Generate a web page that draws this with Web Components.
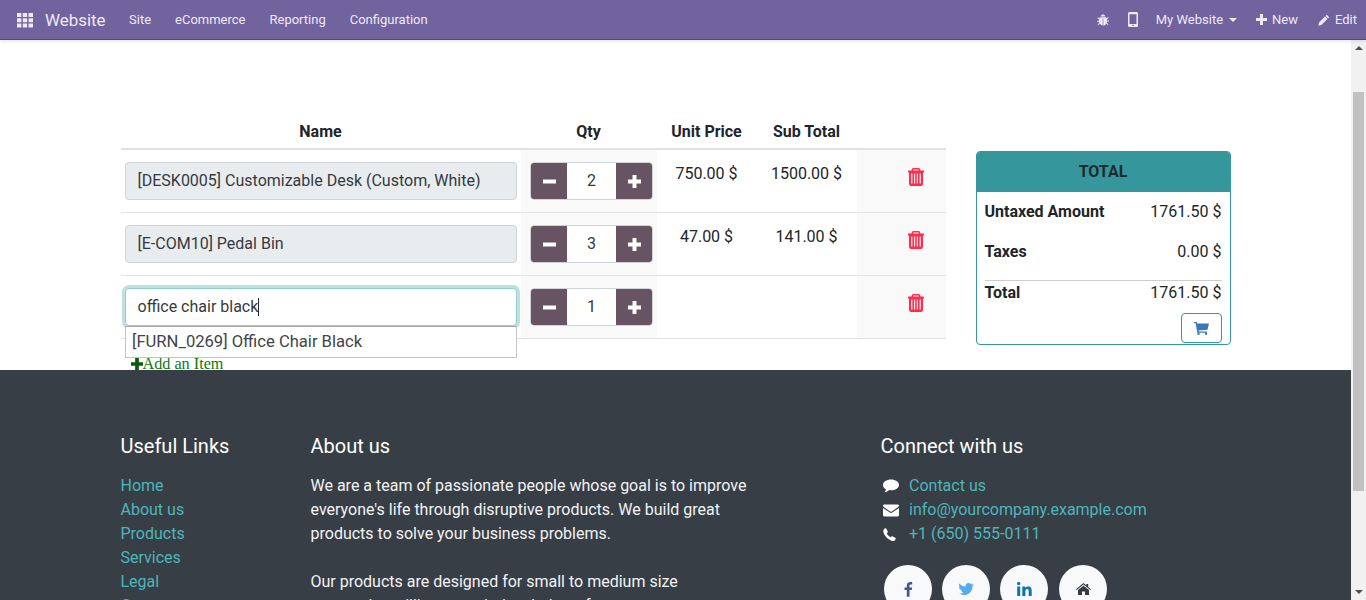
<!DOCTYPE html>
<html><head><meta charset="utf-8">
<style>
html,body{margin:0;padding:0;height:600px;overflow:hidden;background:#fff;font-family:Roboto,sans-serif}
body{display:flex;flex-direction:column}
</style></head><body>
<o-navbar></o-navbar>
<o-page></o-page>
<script>
const I={
grid:'<svg width="16" height="16" viewBox="0 0 16 16" fill="currentColor"><path d="M0 1h4.400v4H0zM5.800 1h4.400v4H5.800zM11.600 1H16v4h-4.400zM0 6.200h4.400v4H0zM5.800 6.200h4.400v4H5.800zM11.600 6.200H16v4h-4.400zM0 11.400h4.400v4H0zM5.800 11.400h4.400v4H5.800zM11.600 11.400H16v4h-4.400z"/></svg>',
bug:'<svg width="12" height="12" viewBox="0 0 12 12" fill="currentColor"><path d="M3.600 2.600C4 1.200 5 .6 6 .6s2 .6 2.400 2zM3 3.200h6c.4.3.6.7.7 1.100l1.400-1.200.6.6-1.800 1.700v1.200h2v.9h-2c0 .4-.1.8-.2 1.100l1.800 1.800-.6.6-1.600-1.600C8.700 10.800 7.500 11.400 6.300 11.500V4.800h-.6v6.700c-1.200-.1-2.400-.7-3-1.900l-1.600 1.600-.6-.6L2.300 8.800c-.1-.3-.2-.7-.2-1.100H.1v-.9h2V5.600L.3 3.900l.6-.6 1.400 1.200c.1-.5.3-1 .7-1.300z"/></svg>',
phone:'<svg width="10" height="15" viewBox="0 0 10 15" fill="currentColor"><path fill-rule="evenodd" d="M1.600 0h6.800C9.300 0 10 .7 10 1.600v11.800c0 .9-.7 1.600-1.600 1.600H1.600C.7 15 0 14.300 0 13.400V1.600C0 .7.700 0 1.600 0zM1.500 2.200v9.900h7V2.200zM4.300 12.700h1.400v1.200H4.300z"/></svg>',
plus:'<svg width="11" height="11" viewBox="0 0 11 11" fill="currentColor"><path d="M4 0h3v4h4v3H7v4H4V7H0V4h4z"/></svg>',
pencil:'<svg width="12" height="12" viewBox="0 0 12 12" fill="currentColor"><path d="M8.800.8 11.200 3.200 10 4.400 7.600 2zM7 2.600 9.400 5 3.400 11 .4 11.800 1 8.600z"/></svg>',
minus:'<svg width="13" height="13" viewBox="0 0 13 13" fill="currentColor"><path d="M0 4.500h13v4H0z"/></svg>',
plusb:'<svg width="13" height="13" viewBox="0 0 13 13" fill="currentColor"><path d="M4.500 0h4v4.500H13v4H8.500V13h-4V8.500H0v-4h4.500z"/></svg>',
trash:'<svg width="16" height="18" viewBox="0 0 16 18" fill="currentColor"><path fill-rule="evenodd" d="M5.300 0h5.400c.5 0 1 .3 1.200.8l.7 1.600h2.700c.4 0 .7.300.7.700v1.400H15V15.500c0 1.300-.8 2.500-2 2.500H3c-1.200 0-2-1.100-2-2.500V4.500H0V3.100c0-.4.300-.7.700-.7h2.700l.7-1.600C4.300.3 4.800 0 5.300 0zM5.500 1.500 5.100 2.400H10.900L10.500 1.500zM3.200 5.500V15.500H4.400V5.500zM6.100 5.500V15.500H7.200V5.500zM8.800 5.500V15.500H9.900V5.500zM11.600 5.500V15.500H12.800V5.500z"/></svg>',
cart:'<svg width="15" height="13" viewBox="0 0 15 13" fill="currentColor"><path d="M0 0h2.700l.5 1.500H15l-1.500 6.300-9 .7.300 1H13v1.300H3.200L1.700 1.300H0z"/><circle cx="4.500" cy="11.800" r="1.200"/><circle cx="12" cy="11.800" r="1.200"/></svg>',
chat:'<svg width="16" height="14" viewBox="0 0 16 14" fill="currentColor"><path d="M8 .6c4.400 0 8 2.400 8 5.300s-3.600 5.300-8 5.300c-.6 0-1.200 0-1.700-.1C5 12.300 3.500 13 1.400 13.300c.7-.8 1.300-1.700 1.500-3C1.100 9.300 0 7.700 0 5.900 0 3 3.600.6 8 .6z"/></svg>',
mail:'<svg width="16" height="13" viewBox="0 0 16 13" fill="currentColor"><path d="M1.400.5h13.200c.7 0 1.400.5 1.400 1.100 0 .6-.5 1.300-1.100 1.700L8.800 7.400c-.5.300-1.100.3-1.600 0L1.100 3.300C.5 2.900 0 2.200 0 1.600 0 1 .700.5 1.400.5zM0 4.100 6.800 8.600c.7.400 1.700.4 2.400 0L16 4.100V11.100c0 .8-.6 1.400-1.400 1.400H1.400C.6 12.500 0 11.900 0 11.100z"/></svg>',
tel:'<svg width="13" height="13" viewBox="0 0 13 13" fill="currentColor"><path d="M3 .3 4.800 3.600c.1.300.1.600-.1.800L3.800 5.300c.5 1.600 2.300 3.400 3.900 3.900l.9-.9c.2-.2.500-.2.800-.1l3.300 1.800c.2.600-.4 1.900-1 2.400-.8.600-2.200.7-3.300.3C5 11.500 1.500 8 .5 4.600.1 3.500.3 2 .9 1.300 1.400.7 2.400 0 3 .3z"/></svg>',
fb:'<svg width="9" height="15" viewBox="0 0 9 15" fill="currentColor"><path d="M8.200.2v2.300H6.800c-1.100 0-1.300.5-1.300 1.300v1.700h2.600l-.3 2.600H5.500V14.800H2.800V8.100H.5V5.500h2.300V3.500C2.800 1.300 4.200.1 6.200.1c1 0 1.700.1 2 .1z"/></svg>',
tw:'<svg width="15" height="12" viewBox="0 0 15 12" fill="currentColor"><path d="M15 1.500c-.4.600-.9 1.100-1.500 1.500v.4c0 4-3 8.600-8.600 8.600-1.800 0-3.400-.5-4.700-1.400.2 0 .5 0 .7 0 1.400 0 2.700-.5 3.800-1.300-1.300 0-2.400-.9-2.800-2.100.2 0 .4.100.6.100.3 0 .6 0 .8-.1C1 6.900-.1 5.600-.1 4v0c.4.200.9.400 1.400.4C.5 3.900 0 3 0 2c0-.6.100-1.100.4-1.500C1.900 2.300 4.100 3.500 6.600 3.600c0-.2-.1-.5-.1-.7C6.500 1.300 7.900 0 9.500 0c.9 0 1.600.4 2.200 1 .7-.1 1.300-.4 1.900-.7-.2.700-.7 1.300-1.300 1.700.6-.1 1.200-.2 1.700-.5z"/></svg>',
li:'<svg width="15" height="14" viewBox="0 0 15 14" fill="currentColor"><path d="M.2 4.600h3V14h-3zM1.700 0c1 0 1.700.7 1.700 1.600S2.700 3.200 1.700 3.200 0 2.500 0 1.600 .700 0 1.700 0zM5.300 4.600h2.900v1.300c.4-.8 1.400-1.500 2.900-1.500 3 0 3.600 2 3.600 4.500V14h-3V9.400c0-1.100 0-2.500-1.500-2.500S8.400 8.100 8.400 9.300V14H5.300z"/></svg>',
home:'<svg width="15" height="12" viewBox="0 0 15 12" fill="currentColor"><path d="M7.500 0 10.300 2.400V1h1.900v3L15 6.300l-.7.800L7.500 1.500.7 7.100 0 6.300zM7.500 2.700 13 7.100V12H9V8.400H6V12H2V7.100z"/></svg>'
};
function def(name,css,html){
 customElements.define(name,class extends HTMLElement{
  connectedCallback(){ if(this.shadowRoot)return; const r=this.attachShadow({mode:'open'}); r.innerHTML='<style>'+css+'</style>'+(typeof html==='function'?html(this):html); }
 });
}
def('o-navbar',`
:host{display:flex;align-items:center;height:39px;background:#71639e;border-bottom:1px solid #4f4670;box-shadow:0 1px 4px rgba(0,0,0,.12);color:#eee9f5;font:13px Roboto,sans-serif;flex:none;position:relative;z-index:3;padding:0 9px 0 17px}
.ic{display:flex}
.brand{font-size:16.9px;margin:0 12px;width:60px;white-space:nowrap}
a{margin:0 12px;white-space:nowrap}
.sp{flex:1}
.r{display:flex;align-items:center;gap:4px;white-space:nowrap}
.caret{width:0;height:0;border:4px solid transparent;border-top-color:currentColor;border-bottom:0;margin-left:2px}
`,`<span class="ic">${I.grid}</span><span class="brand">Website</span><a>Site</a><a>eCommerce</a><a>Reporting</a><a>Configuration</a><span class="sp"></span>
<span class="r" style="margin-right:19px">${I.bug}</span><span class="r" style="margin-right:18px">${I.phone}</span>
<span class="r" style="margin-right:19px">My Website<span class="caret"></span></span><span class="r" style="margin-right:20px">${I.plus}<span style="margin-left:1px">New</span></span><span class="r">${I.pencil}<span style="margin-left:1px">Edit</span></span>`);

def('o-page',`
:host{display:flex;flex:1;min-height:0;overflow:hidden}
.main{flex:1;min-width:0;display:flex;flex-direction:column}
.bar{width:15px;background:#f1f1f1;position:relative;flex:none}
.up{position:absolute;left:4px;top:6px;width:0;height:0;border:4px solid transparent;border-top:0;border-bottom:4px solid #505050}
.down{position:absolute;left:4px;bottom:6px;width:0;height:0;border:4px solid transparent;border-bottom:0;border-top:4px solid #505050}
.thumb{position:absolute;left:2px;width:11px;top:52px;height:399px;background:#c1c1c1}
.top{height:330px;flex:none;overflow:hidden;box-sizing:border-box;padding:80px 0 0 120.5px;display:flex;align-items:flex-start;position:relative;z-index:1}
`,`<div class="main"><div class="top"><o-cart></o-cart><o-total></o-total></div><o-footer></o-footer></div><div class="bar"><span class="up"></span><span class="thumb"></span><span class="down"></span></div>`);

const row=(cls,name,q,p,s)=>`<o-row ${cls?'focus':''} q="${q}" p="${p}" s="${s}" n="${name}"></o-row>`;
def('o-cart',`
:host{display:block;width:825px;flex:none;font:16px/24px Roboto,sans-serif;color:#212529;position:relative}
.h{display:grid;grid-template-columns:400px 136px 100px 100px 89px;height:30px;box-sizing:border-box;border-bottom:2px solid #dee2e6;font-weight:700;text-align:center;line-height:23px}
.h span{white-space:nowrap}
.add{position:absolute;left:10px;top:235px;font:16.2px/18px "Liberation Serif",serif;color:#0f7a0f;display:flex;align-items:center;gap:0}
.add svg{color:#0b5c0b;display:block}
`,`<div class="h"><span>Name</span><span>Qty</span><span>Unit Price</span><span>Sub Total</span><span></span></div>
${row(0,'[DESK0005] Customizable Desk (Custom, White)',2,'750.00 $','1500.00 $')}
${row(0,'[E-COM10] Pedal Bin',3,'47.00 $','141.00 $')}
${row(1,'office chair black',1,'','')}
<div class="add"><svg width="12" height="12" viewBox="0 0 13 13" fill="currentColor"><path d="M4.500 0h4v4.500H13v4H8.500V13h-4V8.500H0v-4h4.500z"/></svg>Add an Item</div>
<o-suggest>[FURN_0269] Office Chair Black</o-suggest>`);

def('o-row',`
:host{display:grid;grid-template-columns:400px 136px 100px 100px 89px;height:63px;box-sizing:border-box;border-bottom:1px solid #dee2e6}
.c{text-align:center;padding-top:12px;box-sizing:border-box;white-space:nowrap}
.name{padding:12px 4px 0;text-align:left;background:#fff}
.inp{height:38px;box-sizing:border-box;border:1px solid #ced4da;border-radius:4px;background:#e9ecef;padding:0 12px;line-height:36px;color:#343a40;white-space:nowrap;position:relative}
.foc{background:#fff;border-color:#8fcfcf;box-shadow:0 0 0 3px rgba(1,126,132,.25)}
.caret{display:inline-block;width:1px;height:18px;background:#212529;vertical-align:-4px}
.q{background:#f9f9f9;padding:12px 3.500px 0 9.500px;box-sizing:border-box}
.qb{display:flex;height:38px;box-sizing:border-box;border:1px solid #ced4da;border-radius:4px;overflow:hidden;background:#fff}
.b{width:36px;background:#675362;color:#fff;display:flex;align-items:center;justify-content:center;flex:none}
.v{flex:1;text-align:center;line-height:36px;color:#343a40}
.d{background:#f9f9f9;color:#ff2d4b;padding:18px 0 0 51px;box-sizing:border-box}
.d svg{display:block}
`,e=>{const f=e.hasAttribute('focus');return `<div class="name"><div class="inp ${f?'foc':''}">${e.getAttribute('n')}${f?'<span class="caret"></span>':''}</div></div>
<div class="q"><div class="qb"><span class="b">${I.minus}</span><span class="v">${e.getAttribute('q')}</span><span class="b">${I.plusb}</span></div></div>
<div class="c" style="background:#fff">${e.getAttribute('p')}</div><div class="c" style="background:#fff">${e.getAttribute('s')}</div>
<div class="d">${I.trash}</div>`});

def('o-suggest',`
:host{position:absolute;left:4.500px;top:206px;width:392px;height:32px;box-sizing:border-box;background:#fff;border:1px solid #c4c4c4;border-top-color:#aaa;padding-left:6px;font:16.6px/30px Roboto,sans-serif;color:#3f4449;white-space:nowrap;z-index:2}
`,`<slot></slot>`);

def('o-total',`
:host{display:block;width:255px;flex:none;margin:31px 0 0 30px;height:194px;box-sizing:border-box;border:1px solid #35979c;border-radius:4px;font:16px/24px Roboto,sans-serif;color:#212529;overflow:hidden}
.t{height:40px;background:#35979c;text-align:center;font-weight:700;line-height:39px;color:#1f2a2f}
.b{padding:8px 8px 0}
.l{display:flex;justify-content:space-between}
.l b{font-weight:700}
.l+.l{margin-top:16px}
.last{border-top:1px solid #ccc;margin-top:16px!important}
.btn{margin:8px 0 0 auto;width:41px;height:30px;box-sizing:border-box;border:1px solid #35979c;border-radius:4px;color:#3a78b5;display:flex;align-items:center;justify-content:center}
`,`<div class="t">TOTAL</div><div class="b"><div class="l"><b>Untaxed Amount</b><span>1761.50 $</span></div><div class="l"><b>Taxes</b><span>0.00 $</span></div><div class="l last"><b>Total</b><span>1761.50 $</span></div><div class="btn">${I.cart}</div></div>`);

def('o-footer',`
:host{display:block;flex:1;background:#383e45;font:16px/24px Roboto,sans-serif;color:#f1f3f5;overflow:hidden;padding:64px 0 0 120.5px;box-sizing:border-box}
.g{display:flex}
h5{font:400 20px/24px Roboto,sans-serif;margin:0 0 16px;color:#fff}
.c1{width:190px}.c2{width:570px}
a{display:block;color:#4db6bb;white-space:nowrap}
.p{width:445px;margin:0 0 24px}
.ci{display:flex;align-items:center;color:#4db6bb;height:24px}
.ci i{width:28.500px;display:flex;color:#fff;padding-left:2px;box-sizing:border-box}
.soc{display:flex;gap:10px;margin-top:19px;padding-left:3.500px}
.soc span{width:48px;height:48px;border-radius:50%;background:#f8f9fa;display:flex;align-items:center;justify-content:center;flex:none}
`,`<div class="g"><div class="c1"><h5>Useful Links</h5><a>Home</a><a>About us</a><a>Products</a><a>Services</a><a>Legal</a><a>Contact us</a></div>
<div class="c2"><h5>About us</h5><p class="p">We are a team of passionate people whose goal is to improve everyone's life through disruptive products. We build great products to solve your business problems.</p><p class="p">Our products are designed for small to medium size companies willing to optimize their performance.</p></div>
<div><h5>Connect with us</h5><div class="ci"><i>${I.chat}</i>Contact us</div><div class="ci"><i>${I.mail}</i>info@yourcompany.example.com</div><div class="ci"><i>${I.tel}</i>+1 (650) 555-0111</div>
<div class="soc"><span style="color:#3b5998">${I.fb}</span><span style="color:#55acee">${I.tw}</span><span style="color:#0e76a8">${I.li}</span><span style="color:#343a40;margin-left:1px">${I.home}</span></div></div></div>`);
</script>
</body></html>
